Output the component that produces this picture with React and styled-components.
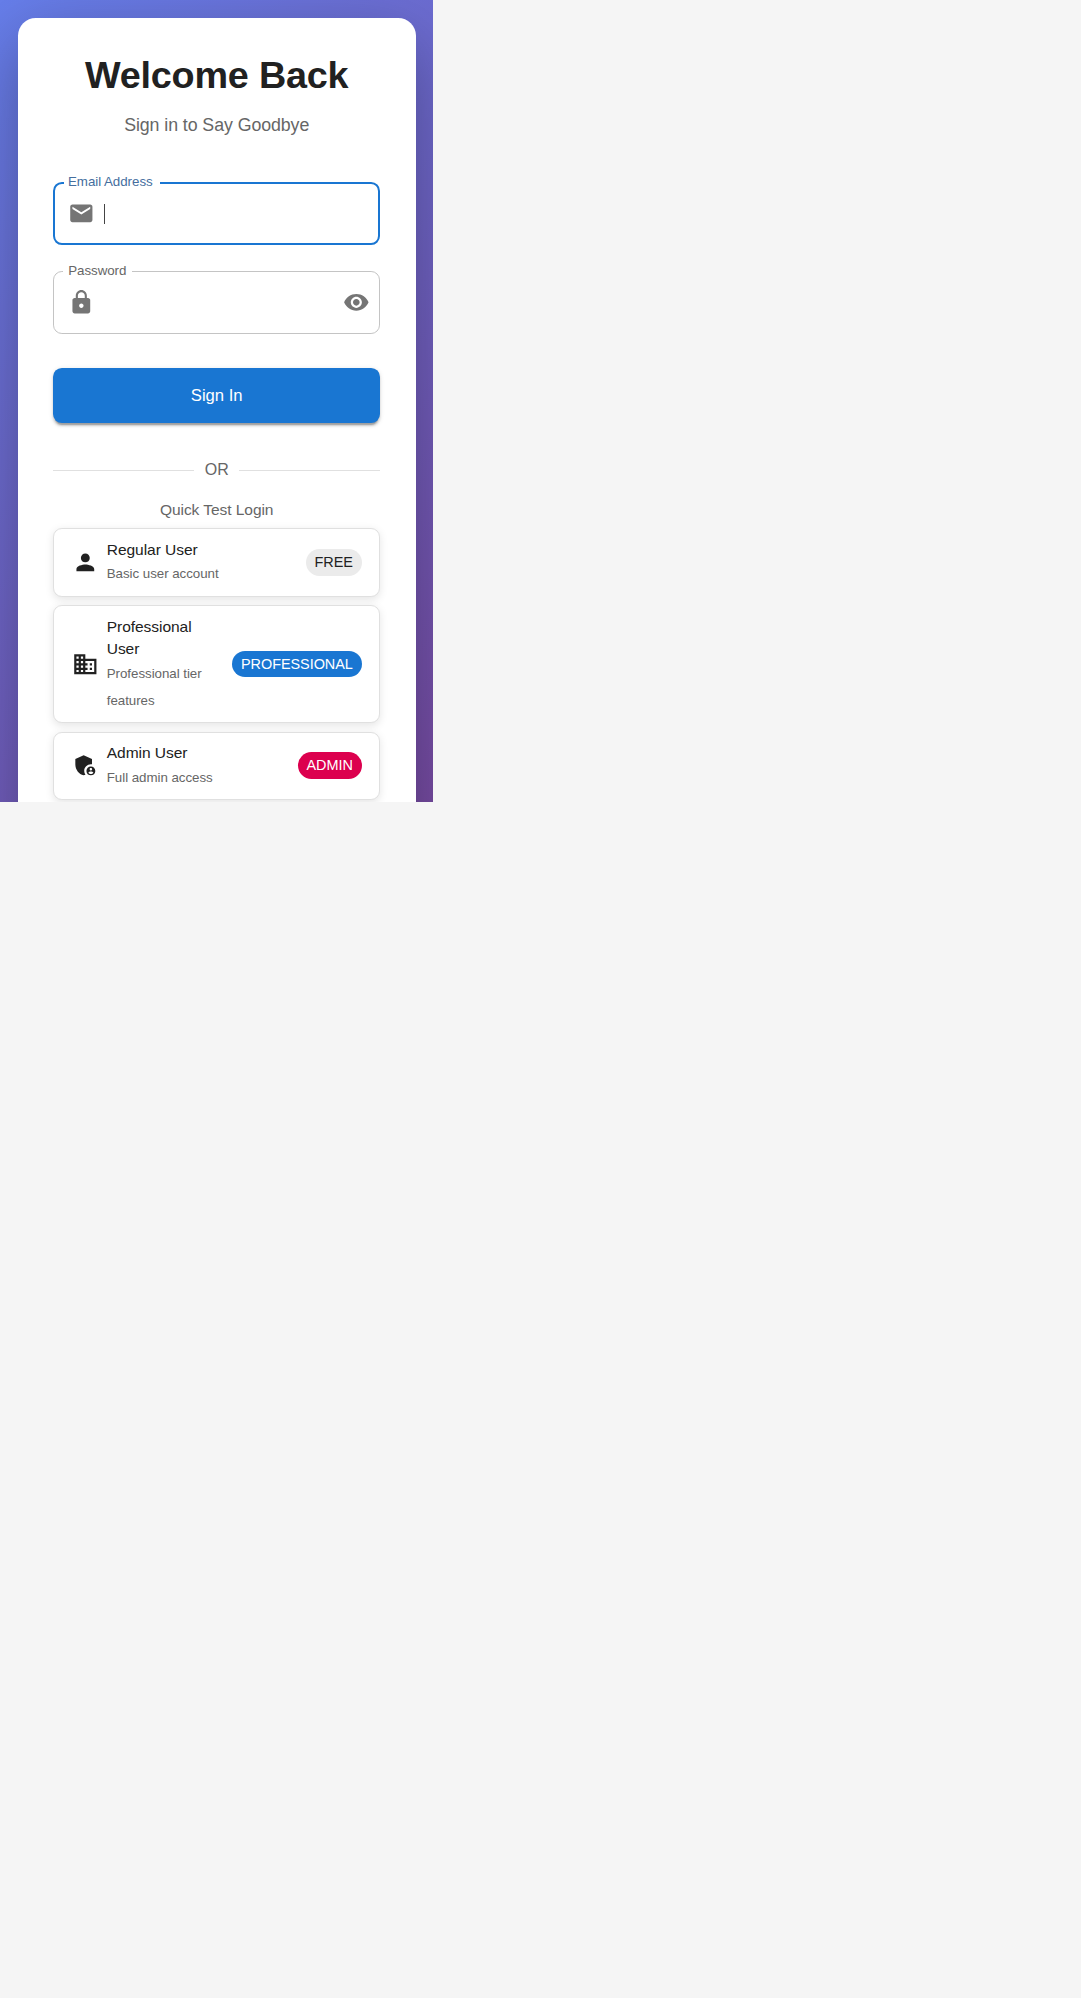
import React from "react";
import styled, { createGlobalStyle } from "styled-components";
import {
  MdEmail,
  MdLock,
  MdVisibility,
  MdPerson,
  MdBusiness,
  MdAdminPanelSettings,
} from "react-icons/md";

const GlobalStyle = createGlobalStyle`
  *, *::before, *::after { box-sizing: border-box; }
  body {
    margin: 0;
    background: #f5f5f5;
    font-family: Helvetica, "Liberation Sans", Arial, sans-serif;
    color: #212121;
  }
`;

const Screen = styled.main`
  width: 433.4px;
  height: 802px;
  overflow: hidden;
  padding: 17.7px;
  background: linear-gradient(135deg, #667eea 0%, #764ba2 100%);
`;

const Panel = styled.section`
  min-height: 900px;
  padding: 35.6px;
  border-radius: 17.8px;
  background: #fff;
  box-shadow: 0 22.2px 66.7px rgba(0, 0, 0, 0.3);
`;

const Title = styled.h1`
  margin: 0;
  padding-top: 1px;
  font-size: 37.78px;
  font-weight: 700;
  line-height: 43px;
  letter-spacing: -0.2px;
  text-align: center;
`;

const Subtitle = styled.p`
  margin: 15px 0 0;
  font-size: 17.78px;
  line-height: 26px;
  letter-spacing: -0.07px;
  text-align: center;
  color: #666;
`;

const Form = styled.form`
  display: flex;
  flex-direction: column;
  gap: 26.6px;
  margin-top: 43.8px;
`;

const Field = styled.div`
  position: relative;
  display: flex;
  align-items: center;
  height: ${(p) => (p.$active ? "62.8px" : "62.2px")};
  padding: 0 ${(p) => (p.$active ? "12.7px" : "9.1px 0 13.9px")};
  border: ${(p) => (p.$active ? "2px solid #1976d2" : "1px solid #c4c4c4")};
  border-radius: 8.9px;
  color: #757575;

  svg {
    flex: none;
    width: 26.67px;
    height: 26.67px;
  }
`;

const FieldLabel = styled.label`
  position: absolute;
  top: ${(p) => (p.$active ? "-11px" : "-10px")};
  left: 8.7px;
  width: ${(p) => p.$width}px;
  padding-left: ${(p) => (p.$active ? "4px" : "5.2px")};
  background: #fff;
  font-size: 13.33px;
  line-height: 17px;
  letter-spacing: -0.04px;
  white-space: nowrap;
  color: ${(p) => (p.$active ? "#456e9e" : "#666")};
`;

const Caret = styled.span`
  width: 1.5px;
  height: 20px;
  margin: 1px 0 0 8.9px;
  background: #444;
`;

const Spacer = styled.span`
  flex: 1;
`;

const SubmitButton = styled.button`
  height: 55.4px;
  margin-top: 7.6px;
  padding: 0;
  border: 0;
  border-radius: 8.9px;
  background: #1976d2;
  color: #fff;
  font: 400 16.67px/54px Helvetica, "Liberation Sans", Arial, sans-serif;
  box-shadow:
    0 3.3px 1.1px -2.2px rgba(0, 0, 0, 0.2),
    0 2.2px 2.2px 0 rgba(0, 0, 0, 0.14),
    0 1.1px 5.6px 0 rgba(0, 0, 0, 0.12);
`;

const Divider = styled.div`
  display: flex;
  align-items: center;
  gap: 10.67px;
  height: 24px;
  margin-top: 35.1px;
  font-size: 16px;
  line-height: 22px;
  color: #666;

  &::before,
  &::after {
    content: "";
    flex: 1;
    height: 1px;
    background: #e0e0e0;
  }
`;

const QuickTitle = styled.p`
  margin: 16.6px 0 0;
  font-size: 15.56px;
  line-height: 22.2px;
  letter-spacing: -0.07px;
  text-align: center;
  color: #666;
`;

const AccountList = styled.div`
  display: flex;
  flex-direction: column;
  gap: 8.9px;
  margin-top: 7.1px;
`;

const AccountCard = styled.div`
  display: flex;
  align-items: center;
  gap: 8.5px;
  padding: 8.6px 17.4px 8.6px 17.3px;
  border: 1px solid #e0e0e0;
  border-radius: 8.9px;
  background: #fff;
  box-shadow: 0 2.2px 8.9px rgba(0, 0, 0, 0.1);

  > svg {
    flex: none;
    width: 26.67px;
    height: 26.67px;
  }
`;

const AccountText = styled.div`
  flex: 1;
  min-width: 0;
`;

const AccountName = styled.div`
  padding-top: 0.8px;
  font-size: 15.56px;
  line-height: 22.2px;
  letter-spacing: -0.06px;
`;

const AccountNote = styled.div`
  margin: 0.5px 0 -1.2px;
  font-size: 13.33px;
  line-height: 26.8px;
  letter-spacing: -0.04px;
  color: #666;
`;

const tones = {
  neutral: { background: "#ebebeb", color: "#212121" },
  primary: { background: "#1976d2", color: "#fff" },
  danger: { background: "#dc004e", color: "#fff" },
};

const Chip = styled.span`
  flex: none;
  height: 26.67px;
  padding: 0 8.9px;
  border-radius: 13.4px;
  background: ${(p) => tones[p.$tone].background};
  color: ${(p) => tones[p.$tone].color};
  font-size: 14.44px;
  line-height: 26.2px;
  letter-spacing: -0.04px;
`;

const accounts = [
  { name: "Regular User", note: "Basic user account", tier: "FREE", tone: "neutral", Icon: MdPerson },
  { name: "Professional User", note: "Professional tier features", tier: "PROFESSIONAL", tone: "primary", Icon: MdBusiness },
  { name: "Admin User", note: "Full admin access", tier: "ADMIN", tone: "danger", Icon: MdAdminPanelSettings },
];

export default function App() {
  return (
    <>
      <GlobalStyle />
      <Screen>
        <Panel>
          <Title>Welcome Back</Title>
          <Subtitle>Sign in to Say Goodbye</Subtitle>
          <Form>
            <Field $active>
              <FieldLabel $active $width={96}>Email Address</FieldLabel>
              <MdEmail />
              <Caret />
            </Field>
            <Field>
              <FieldLabel $width={69}>Password</FieldLabel>
              <MdLock />
              <Spacer />
              <MdVisibility />
            </Field>
            <SubmitButton type="button">Sign In</SubmitButton>
          </Form>
          <Divider>OR</Divider>
          <QuickTitle>Quick Test Login</QuickTitle>
          <AccountList>
            {accounts.map(({ name, note, tier, tone, Icon }) => (
              <AccountCard key={name}>
                <Icon />
                <AccountText>
                  <AccountName>{name}</AccountName>
                  <AccountNote>{note}</AccountNote>
                </AccountText>
                <Chip $tone={tone}>{tier}</Chip>
              </AccountCard>
            ))}
          </AccountList>
        </Panel>
      </Screen>
    </>
  );
}
